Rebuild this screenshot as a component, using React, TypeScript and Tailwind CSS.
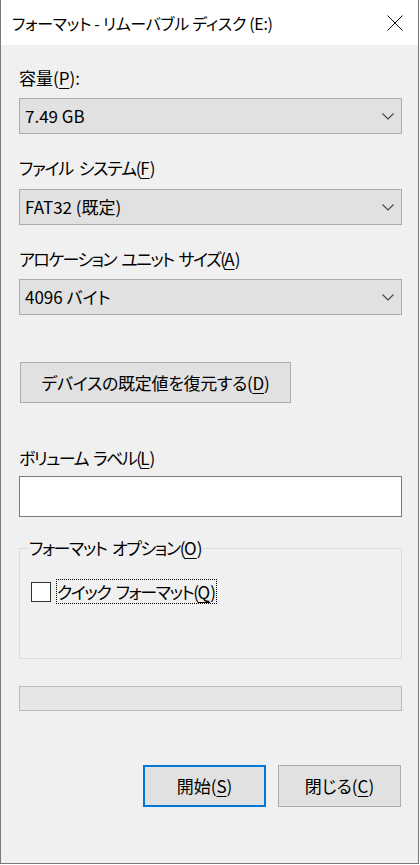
const font = "font-['Noto_Sans_CJK_JP','Noto_Sans',sans-serif] [font-feature-settings:'palt']";

function Key({ k }: { k: string }) {
  return <span className="underline underline-offset-[3px] decoration-1 tracking-normal">{k}</span>;
}

function Chevron() {
  return (
    <svg width="12" height="7" viewBox="0 0 12 7" fill="none" stroke="#444" strokeWidth="1.1">
      <polyline points="0.5,0.5 6,6 11.5,0.5" />
    </svg>
  );
}

function Combo({ value }: { value: string }) {
  return (
    <div className="flex h-[36px] w-[383px] items-center justify-between border border-[#adadad] bg-[#e1e1e1] pl-[5px] pr-[7px] text-[17px]">
      <span>{value}</span>
      <Chevron />
    </div>
  );
}

function Label({ children, className = "" }: { children: React.ReactNode; className?: string }) {
  return <div className={`flex h-[22px] items-center text-[17px] ${className}`}>{children}</div>;
}

export default function App() {
  return (
    <div className={`${font} h-[864px] w-[419px] border-x border-b border-[#7a7a7a] bg-[#f0f0f0] text-black`}>
      <div className="flex h-[45px] items-center justify-between bg-white pl-[11px] pr-[15px] text-[16px]">
        <span className="tracking-[-0.3px]">フォーマット - リムーバブル ディスク (E:)</span>
        <svg width="16" height="16" viewBox="0 0 16 16" stroke="#111" strokeWidth="1">
          <line x1="0.5" y1="0.5" x2="15.5" y2="15.5" />
          <line x1="15.5" y1="0.5" x2="0.5" y2="15.5" />
        </svg>
      </div>

      <div className="flex flex-col pl-[18px]">
        <Label className="mt-[22px]">
          容量(<Key k="P" />):
        </Label>
        <div className="mt-[9px]">
          <Combo value="7.49 GB" />
        </div>

        <Label className="mt-[23px] tracking-[-1.2px] [word-spacing:3px]">
          ファイル システム(<Key k="F" />)
        </Label>
        <div className="mt-[10px]">
          <Combo value="FAT32 (既定)" />
        </div>

        <Label className="mt-[23px] tracking-[-1.6px] [word-spacing:3px]">
          アロケーション ユニット サイズ(<Key k="A" />)
        </Label>
        <div className="mt-[9px]">
          <Combo value="4096 バイト" />
        </div>

        <button
          type="button"
          className="ml-[1px] mt-[47px] flex h-[41px] w-[271px] items-center justify-center border border-[#adadad] bg-[#e1e1e1] text-[17px] tracking-[-0.3px]"
        >
          デバイスの既定値を復元する(<Key k="D" />)
        </button>

        <Label className="mt-[44px] tracking-[-1.6px] [word-spacing:3px]">
          ボリューム ラベル(<Key k="L" />)
        </Label>
        <div className="mt-[7px] h-[41px] w-[383px] border border-[#7a7a7a] bg-white" />

        <div className="relative mt-[31px] h-[111px] w-[383px] border border-[#dcdcdc]">
          <div className="absolute left-[8px] top-[-12px] bg-[#f0f0f0] px-[1px] text-[17px] leading-[22px] tracking-[-1.4px] [word-spacing:3px]">
            フォーマット オプション(<Key k="O" />)
          </div>
          <div className="ml-[11px] mt-[30px] flex items-center">
            <div className="h-[20px] w-[20px] border border-[#333] bg-white" />
            <div className="ml-[5px] flex h-[25px] items-center border border-dotted border-black pr-[1px] text-[17px] tracking-[-1.4px] [word-spacing:3px]">
              クイック フォーマット(<Key k="Q" />)
            </div>
          </div>
        </div>

        <div className="mt-[27px] h-[25px] w-[383px] border border-[#bcbcbc] bg-[#e6e6e6]" />

        <div className="mt-[54px] flex w-[382px] justify-end gap-[12px]">
          <button
            type="button"
            className="flex h-[42px] w-[123px] items-center justify-center border-2 border-[#0078d7] bg-[#e1e1e1] text-[17px]"
          >
            開始(<Key k="S" />)
          </button>
          <button
            type="button"
            className="flex h-[42px] w-[123px] items-center justify-center border border-[#adadad] bg-[#e1e1e1] text-[17px]"
          >
            閉じる(<Key k="C" />)
          </button>
        </div>
      </div>
    </div>
  );
}
